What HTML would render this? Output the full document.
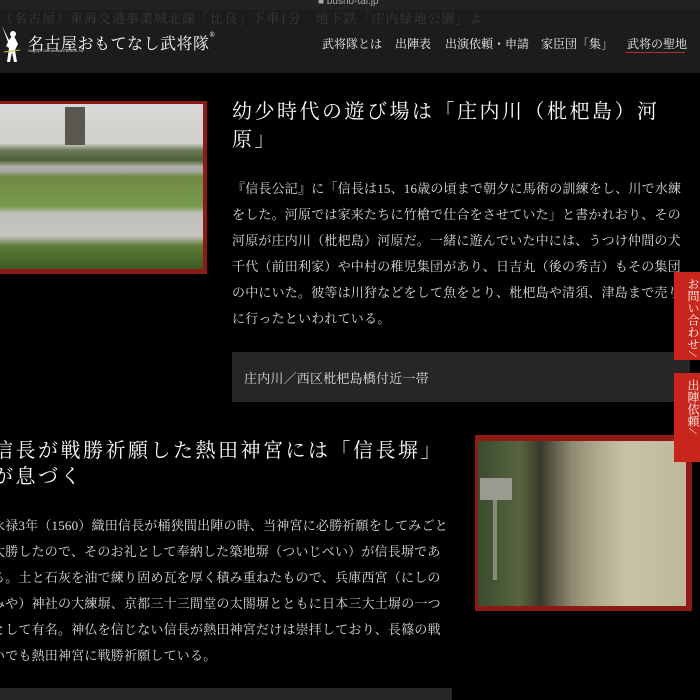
<!DOCTYPE html>
<html><head><meta charset="utf-8"><style>
*{margin:0;padding:0;box-sizing:border-box}
body{width:700px;height:700px;overflow:hidden;background:#000;position:relative;font-family:"Liberation Serif","Noto Serif CJK SC",serif;color:#eee}
.hdr{position:absolute;left:0;top:0;width:700px;height:73px;background:#1c1c1c}
.top{position:absolute;left:0;top:0;width:700px;height:10px;background:#222}
.url{position:absolute;left:318px;top:-4px;font:10px "Liberation Sans",sans-serif;color:#aaa}
.faint{position:absolute;left:0;top:8px;font-size:13px;color:#3a3a3a;white-space:nowrap;letter-spacing:1px}
.logo{position:absolute;left:28px;top:31px;font-size:16px;color:#fff;letter-spacing:0.5px;white-space:nowrap}
.sub{position:absolute;left:28px;top:48px;font:4px "Liberation Sans",sans-serif;color:#ccc}
.nav{position:absolute;top:35px;font-size:12px;color:#eee;white-space:nowrap}
.ul{position:absolute;left:626px;top:52px;width:59px;height:1px;background:#a33}
.abs{position:absolute;white-space:nowrap}
.h{font-size:20px;letter-spacing:2.5px;color:#fff}
.p{font-size:13px;letter-spacing:0.2px;color:#ddd}
.box{position:absolute;background:#262626}
.tab{position:absolute;left:674px;width:26px;background:#c8261d;color:#fff;font-size:12px;line-height:14px;writing-mode:vertical-rl;white-space:nowrap;padding-top:6px;padding-left:6px;letter-spacing:0}
</style></head><body>
<div class="hdr"></div>
<div class="top"></div>
<div class="url">■ busho-tai.jp</div>
<div class="faint">（名古屋）東海交通事業城北線「比良」下車1分　地下鉄「庄内緑地公園」よ</div>
<svg style="position:absolute;left:0;top:22px" width="24" height="44" viewBox="0 0 24 44"><path d="M2 4 L8 20 L6 24 L9 26 L7 40 L10 40 L12 30 L14 40 L17 40 L15 28 L18 22 L14 14 L12 14 L9 18 Z" fill="#fff"/><circle cx="13" cy="12" r="3" fill="#fff"/><path d="M4 30 L20 28" stroke="#d4b23a" stroke-width="1"/></svg>
<div class="logo">名古屋おもてなし武将隊<span style="font-size:7px;vertical-align:top">®</span></div>
<div class="sub">Nagoya Omotenashi Bushu-Tai</div>
<div class="nav" style="left:322px">武将隊とは</div>
<div class="nav" style="left:395px">出陣表</div>
<div class="nav" style="left:445px">出演依頼・申請</div>
<div class="nav" style="left:541px">家臣団「集」</div>
<div class="nav" style="left:627px">武将の聖地</div>
<div class="ul"></div>

<div style="position:absolute;left:-2px;top:101px;width:209px;height:173px;background:#8d1a14"></div>
<div style="position:absolute;left:0;top:104px;width:203px;height:165px;background:linear-gradient(#d8d8d6 0%,#cfd0cc 24%,#6f7a5a 28%,#4c6137 34%,#aeb2a8 38%,#a4a8a0 41%,#6f8a45 44%,#7a9a4a 62%,#bfc0bc 66%,#c4c4c0 80%,#5e7a36 86%,#3e5a25 100%)"></div>
<div style="position:absolute;left:65px;top:107px;width:20px;height:38px;background:#5a5650"></div>

<div class="abs h" style="left:232px;top:95px">幼少時代の遊び場は「庄内川（枇杷島）河</div>
<div class="abs h" style="left:232px;top:123px">原」</div>
<div class="abs p" style="left:232px;top:178px">『信長公記』に「信長は15、16歳の頃まで朝夕に馬術の訓練をし、川で水練</div>
<div class="abs p" style="left:232px;top:204px">をした。河原では家来たちに竹槍で仕合をさせていた」と書かれおり、その</div>
<div class="abs p" style="left:232px;top:230px">河原が庄内川（枇杷島）河原だ。一緒に遊んでいた中には、うつけ仲間の犬</div>
<div class="abs p" style="left:232px;top:256px">千代（前田利家）や中村の稚児集団があり、日吉丸（後の秀吉）もその集団</div>
<div class="abs p" style="left:232px;top:282px">の中にいた。彼等は川狩などをして魚をとり、枇杷島や清須、津島まで売り</div>
<div class="abs p" style="left:232px;top:308px">に行ったといわれている。</div>
<div class="box" style="left:232px;top:352px;width:458px;height:50px"></div>
<div class="abs p" style="left:244px;top:368px;color:#ddd">庄内川／西区枇杷島橋付近一帯</div>

<div class="abs h" style="left:-7px;top:434px">信長が戦勝祈願した熱田神宮には「信長塀」</div>
<div class="abs h" style="left:-7px;top:460px">が息づく</div>
<div class="abs p" style="left:-8px;top:515px">永禄3年（1560）織田信長が桶狭間出陣の時、当神宮に必勝祈願をしてみごと</div>
<div class="abs p" style="left:-8px;top:541px">大勝したので、そのお礼として奉納した築地塀（ついじべい）が信長塀であ</div>
<div class="abs p" style="left:-8px;top:567px">る。土と石灰を油で練り固め瓦を厚く積み重ねたもので、兵庫西宮（にしの</div>
<div class="abs p" style="left:-8px;top:593px">みや）神社の大練塀、京都三十三間堂の太閤塀とともに日本三大土塀の一つ</div>
<div class="abs p" style="left:-8px;top:619px">として有名。神仏を信じない信長が熱田神宮だけは崇拝しており、長篠の戦</div>
<div class="abs p" style="left:-8px;top:645px">いでも熱田神宮に戦勝祈願している。</div>
<div class="box" style="left:0;top:688px;width:452px;height:12px"></div>

<div style="position:absolute;left:475px;top:435px;width:217px;height:176px;background:#8d1a14"></div>
<div style="position:absolute;left:478px;top:441px;width:208px;height:165px;background:linear-gradient(90deg,#3c4a2e 0%,#56653f 20%,#3a3a2c 30%,#8f8a70 45%,#b4ae92 60%,#c8c2a6 72%,#bdb79c 100%)"></div>
<div style="position:absolute;left:480px;top:478px;width:32px;height:22px;background:#9a9a8e"></div>
<div style="position:absolute;left:493px;top:500px;width:4px;height:80px;background:#8a8a7e"></div>

<div class="tab" style="top:272px;height:88px">お問い合わせ ⁄</div>
<div class="tab" style="top:373px;height:89px">出陣依頼 ⁄</div>
</body></html>
